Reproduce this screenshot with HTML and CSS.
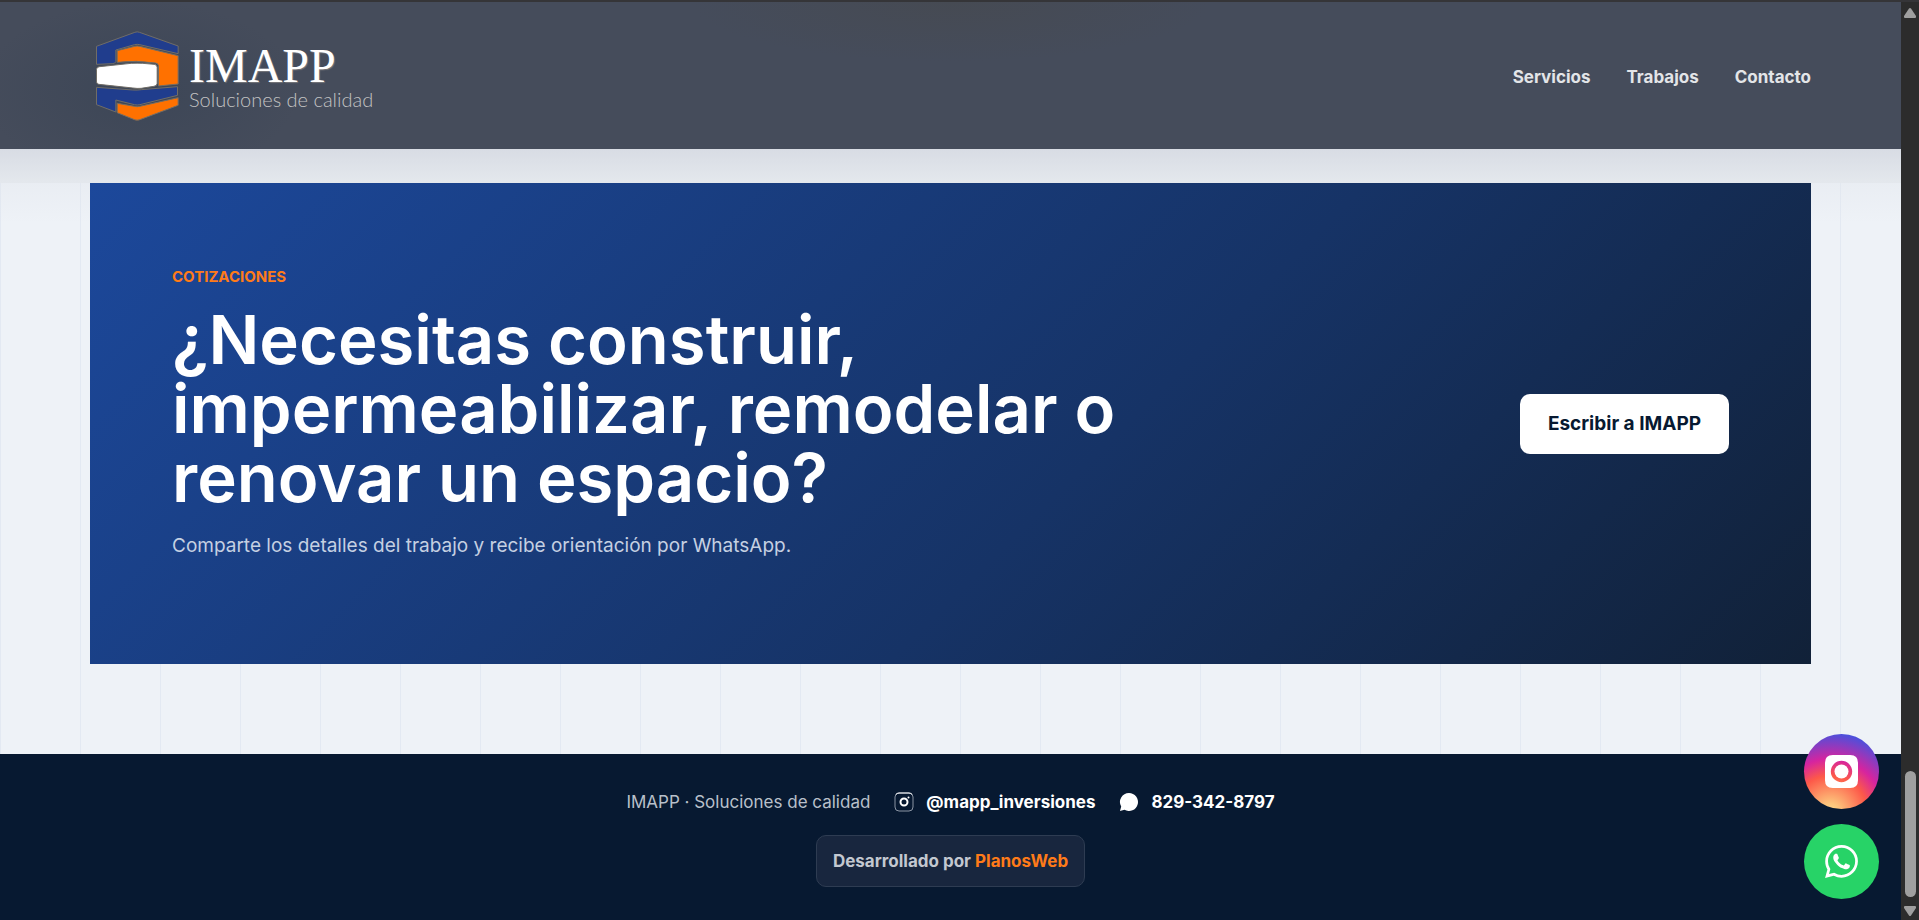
FILE: index.html
```html
<!DOCTYPE html>
<html lang="es">
<head>
<meta charset="utf-8">
<meta name="viewport" content="width=device-width, initial-scale=1">
<title>IMAPP · Soluciones de calidad</title>
<link rel="stylesheet" href="styles.css">
</head>
<body>
<div class="window">
  <div class="page">
    <header class="header">
      <a class="brand" href="#inicio">
        <svg class="brand-mark" viewBox="80 92 248 270" aria-hidden="true">
          <g stroke="#716d66" stroke-width="3" stroke-linejoin="round">
            <path fill="#203d8d" d="M81 138 196 96Q203 93 210 96L326 137V160L211 133Q203 131 195 133L139 149V184Q137 190 128 190L81 192Z"/>
            <path fill="#ff7100" d="M143 151 195 138Q203 136 211 138L326 166V251L267 257V196Q266 189 258 188Q200 179 143 186Z"/>
            <path fill="#fff" d="M81 207Q81 200 90 199L185 189Q203 188 220 189L254 192Q263 193 263 201V249Q263 257 253 258L215 264Q203 265 190 263L88 252Q81 251 81 245Z"/>
            <path fill="#203d8d" d="M81 261 190 269Q203 270 216 268L324 259V285L211 313Q203 315 195 313L139 299V335L81 313Z"/>
            <path fill="#ff7100" d="M143 309 195 318Q203 320 211 318L326 292V315L211 358Q203 361 195 358L143 337Z"/>
          </g>
        </svg>
        <span class="brand-text">
          <span class="brand-name">IMAPP</span>
          <span class="brand-tag">Soluciones de calidad</span>
        </span>
      </a>
      <nav class="nav" aria-label="Principal">
        <a href="#servicios">Servicios</a>
        <a href="#trabajos">Trabajos</a>
        <a href="#contacto">Contacto</a>
      </nav>
    </header>
    <main class="main">
      <section class="cta" id="contacto">
        <div class="cta-copy">
          <p class="eyebrow">COTIZACIONES</p>
          <h1 class="title">¿Necesitas construir, impermeabilizar, remodelar o renovar un espacio?</h1>
          <p class="lead">Comparte los detalles del trabajo y recibe orientación por WhatsApp.</p>
        </div>
        <a class="cta-button" href="#whatsapp">Escribir a IMAPP</a>
      </section>
    </main>
    <footer class="footer">
      <div class="footer-row">
        <span>IMAPP · Soluciones de calidad</span>
        <a class="contact" href="#instagram">
          <svg width="20" height="20" viewBox="0 0 20 20" fill="none" aria-hidden="true">
            <rect x="1" y="1" width="18" height="18" rx="4" stroke="#8b95a4"/>
            <path d="M2 2.5Q3 1 5 1H15Q17 1 18 2.5" stroke="#fff"/>
            <circle cx="10" cy="10" r="3.5" stroke="#fff" stroke-width="2"/>
            <circle cx="14.5" cy="5.5" r="1" fill="#fff"/>
          </svg>
          @mapp_inversiones
        </a>
        <a class="contact" href="#telefono">
          <svg width="20" height="20" viewBox="0 0 20 20" aria-hidden="true">
            <path fill="#fff" d="M10 1a9 9 0 1 1-4.500 16.800L1 19l1.200-4.500A9 9 0 0 1 10 1Z"/>
          </svg>
          829-342-8797
        </a>
      </div>
      <a class="credit" href="#planosweb">Desarrollado por <strong>PlanosWeb</strong></a>
    </footer>
    <div class="floating">
      <a class="float instagram" href="#instagram" aria-label="Instagram">
        <svg width="33" height="33" viewBox="0 0 34 34" aria-hidden="true">
          <path fill="#fff" fill-rule="evenodd" d="M8 0H26Q34 0 34 8V26Q34 34 26 34H8Q0 34 0 26V8Q0 0 8 0ZM17 6a11 11 0 1 0 0 22a11 11 0 0 0 0-22Z"/>
          <circle cx="17" cy="17" r="7.200" fill="#fff"/>
        </svg>
      </a>
      <a class="float whatsapp" href="#whatsapp" aria-label="WhatsApp">
        <svg width="33" height="33" viewBox="0 0 24 24" fill="#fff" aria-hidden="true">
          <path d="M17.472 14.382c-.297-.149-1.758-.867-2.030-.967-.273-.099-.471-.148-.670.150-.197.297-.767.966-.940 1.164-.173.199-.347.223-.644.075-.297-.150-1.255-.463-2.390-1.475-.883-.788-1.480-1.761-1.653-2.059-.173-.297-.018-.458.130-.606.134-.133.298-.347.446-.520.149-.174.198-.298.298-.497.099-.198.050-.371-.025-.520-.075-.149-.669-1.612-.916-2.207-.242-.579-.487-.500-.669-.510-.173-.008-.371-.010-.570-.010-.198 0-.520.074-.792.372-.272.297-1.040 1.016-1.040 2.479 0 1.462 1.065 2.875 1.213 3.074.149.198 2.096 3.200 5.077 4.487.709.306 1.262.489 1.694.625.712.227 1.360.195 1.871.118.571-.085 1.758-.719 2.006-1.413.248-.694.248-1.289.173-1.413-.074-.124-.272-.198-.570-.347m-5.421 7.403h-.004a9.870 9.870 0 0 1-5.031-1.378l-.361-.214-3.741.982.998-3.648-.235-.374a9.860 9.860 0 0 1-1.510-5.260c.001-5.450 4.436-9.884 9.888-9.884 2.640 0 5.122 1.030 6.988 2.898a9.825 9.825 0 0 1 2.893 6.994c-.003 5.450-4.437 9.884-9.885 9.884m8.413-18.297A11.815 11.815 0 0 0 12.050 0C5.495 0 .160 5.335.157 11.892c0 2.096.547 4.142 1.588 5.945L.057 24l6.305-1.654a11.882 11.882 0 0 0 5.683 1.448h.005c6.554 0 11.890-5.335 11.893-11.893a11.821 11.821 0 0 0-3.480-8.413Z"/>
        </svg>
      </a>
    </div>
  </div>
  <div class="scrollbar" aria-hidden="true">
    <svg width="14" height="12" viewBox="0 0 14 12"><path fill="#9f9f9f" d="M6 1.500Q7 .500 8 1.500L13 9Q13.500 11 12 11H2Q.500 11 1 9Z"/></svg>
    <span class="thumb"></span>
    <svg width="14" height="12" viewBox="0 0 14 12"><path fill="#9f9f9f" d="M6 10.500Q7 11.500 8 10.500L13 3Q13.500 1 12 1H2Q.500 1 1 3Z"/></svg>
  </div>
</div>
</body>
</html>
```
FILE: styles.css
```css
* { box-sizing: border-box; }

body {
  margin: 0;
  font-family: Inter, "Liberation Sans", sans-serif;
  color: #fff;
}

a { color: inherit; text-decoration: none; }

.window {
  display: flex;
  min-height: 100vh;
  border-top: 2px solid #353538;
}

.page {
  position: relative;
  flex: 1;
  min-width: 0;
  display: flex;
  flex-direction: column;
}

.header {
  display: flex;
  align-items: center;
  justify-content: space-between;
  height: 147px;
  padding: 0 90px;
  background:
    radial-gradient(ellipse 160px 90px at 140px 88px, rgba(52, 64, 82, 0.5), transparent),
    radial-gradient(ellipse 260px 60px at 50% 0, rgba(70, 74, 82, 0.9), transparent),
    #454c5b;
}

.brand {
  display: flex;
  align-items: center;
  gap: 10px;
  padding-left: 6px;
}

.brand-mark { width: 83px; height: 90px; }

.brand-text {
  display: flex;
  flex-direction: column;
}

.brand-name {
  font: 48px/46px "Liberation Serif", serif;
  text-shadow: 1px 1px 1px #77777a;
}

.brand-tag {
  font: 300 20px/20px Lato, sans-serif;
  color: #c3c3c3;
}

.nav {
  display: flex;
  gap: 36px;
  padding-top: 2px;
  font-size: 17px;
  font-weight: 700;
  line-height: 24px;
  color: #e3e5e8;
}

.main {
  flex: 1;
  padding: 34px 90px 90px;
  background:
    linear-gradient(#d8dce4, #e4e8ed) 0 0 / 100% 34px no-repeat,
    linear-gradient(rgba(226, 230, 237, 0.4), transparent) 0 34px / 100% 40px no-repeat,
    repeating-linear-gradient(90deg, #e3e9f2 0 1px, transparent 1px 80px),
    #eef2f7;
}

.cta {
  display: flex;
  align-items: center;
  justify-content: space-between;
  gap: 48px;
  padding: 82px;
  background: linear-gradient(135deg, #1c489b 0%, #163366 58%, #112138 100%);
}

.cta-copy { max-width: 980px; }

.eyebrow {
  margin: 0 0 16px;
  font-size: 15px;
  font-weight: 700;
  line-height: 24px;
  color: #ff7b19;
}

.title {
  margin: 0;
  font-size: 67px;
  font-weight: 600;
  line-height: 69px;
}

.lead {
  margin: 18px 0 20px;
  font-size: 19px;
  line-height: 32px;
  color: #c5d0e2;
}

.cta-button {
  flex: none;
  padding: 18px 28px;
  border-radius: 10px;
  background: #fff;
  font-size: 19px;
  font-weight: 700;
  line-height: 24px;
  color: #071931;
}

.footer {
  display: flex;
  flex-direction: column;
  align-items: center;
  gap: 19px;
  padding: 34px 90px 33px;
  background: #071931;
  font-size: 17px;
  line-height: 28px;
  color: #b9c0ca;
}

.footer-row { display: flex; align-items: center; gap: 24px; }

.contact {
  display: flex;
  align-items: center;
  gap: 12px;
  font-weight: 700;
  color: #fff;
}

.credit {
  padding: 10px 16px;
  border: 1px solid #2e3c52;
  border-radius: 10px;
  background: #18263e;
  font-weight: 700;
  line-height: 30px;
  color: #c3c8d0;
}

.credit strong { font-weight: 700; color: #ff7b19; }

.floating {
  position: absolute;
  right: 22px;
  bottom: 21px;
  display: grid;
  gap: 15px;
}

.float {
  display: grid;
  place-items: center;
  width: 75px;
  height: 75px;
  border-radius: 50%;
}

.instagram {
  background: radial-gradient(circle at 35% 105%, #fdd98a 0%, #fdc57c 10%, #fd5949 40%, #d6249f 58%, #4b50dc 86%);
}

.whatsapp { background: #27d367; }

.scrollbar {
  flex: none;
  display: flex;
  flex-direction: column;
  align-items: center;
  justify-content: space-between;
  width: 18px;
  padding: 5px 2px 3px;
  background: #2c2c2c;
}

.thumb {
  width: 11px;
  height: 126px;
  margin: auto 0 8px;
  border-radius: 6px;
  background: #9f9f9f;
}
```
